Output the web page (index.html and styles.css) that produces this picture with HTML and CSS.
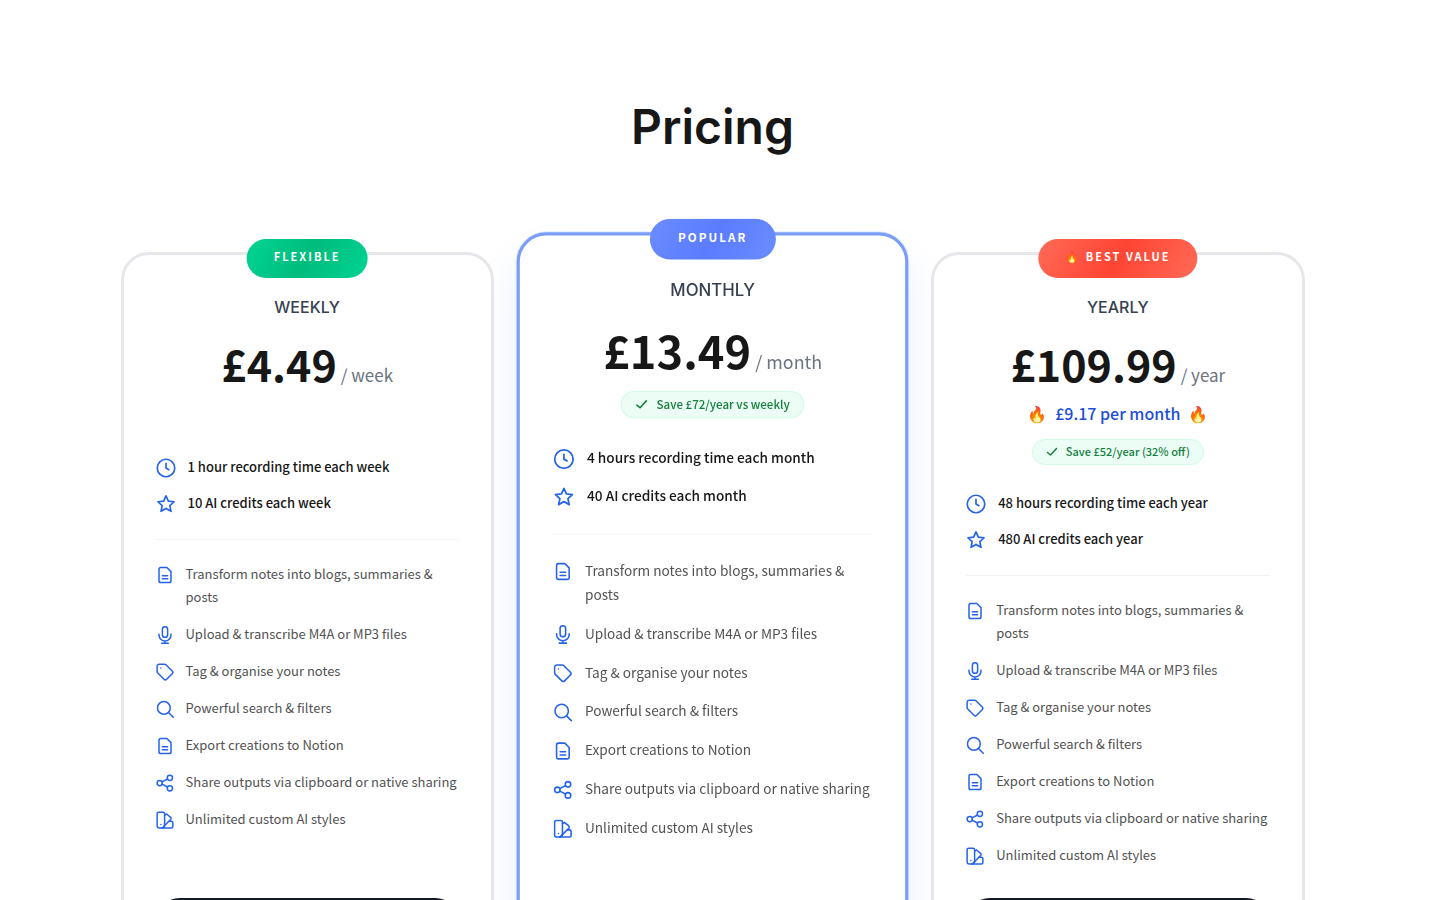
FILE: index.html
```html
<!DOCTYPE html>
<html lang="en">
<head>
<meta charset="utf-8">
<meta name="viewport" content="width=device-width, initial-scale=1">
<title>Pricing</title>
<link rel="stylesheet" href="styles.css">
</head>
<body>
<svg class="sprite" aria-hidden="true">
  <symbol id="clock" viewBox="0 0 24 24"><circle cx="12" cy="12" r="10.500"/><path d="M12 6.500v5.500l3.500 2"/></symbol>
  <symbol id="star" viewBox="0 0 24 24"><path d="M12 2.300l2.800 6.200 6.900.800-5.100 4.600 1.400 6.900-6-3.500-6 3.500 1.400-6.900-5.100-4.600 6.900-.800z"/></symbol>
  <symbol id="file" viewBox="0 0 24 24"><path d="M14.500 2H6.500a2.500 2.500 0 0 0-2.500 2.500v15A2.500 2.500 0 0 0 6.500 22h11a2.500 2.500 0 0 0 2.500-2.500V7.500z"/><path d="M8.500 13h7M8.500 17h7"/></symbol>
  <symbol id="mic" viewBox="0 0 24 24"><rect x="8.500" y="1" width="7" height="14" rx="3.500"/><path d="M4 11v1a8 8 0 0 0 16 0v-1M12 20v3M7.500 23h9"/></symbol>
  <symbol id="tag" viewBox="0 0 24 24"><path d="M1.500 4.500a3 3 0 0 1 3-3h6.700a3 3 0 0 1 2.100.900l8.300 8.300a2.500 2.500 0 0 1 0 3.500l-7.400 7.400a2.500 2.500 0 0 1-3.500 0L2.400 13.300a3 3 0 0 1-.900-2.100z"/><path d="M6.500 6.500h.01"/></symbol>
  <symbol id="search" viewBox="0 0 24 24"><circle cx="10.500" cy="10.500" r="8.500"/><path d="M16.700 16.700 23 23"/></symbol>
  <symbol id="share" viewBox="0 0 24 24"><circle cx="18.500" cy="5" r="3.500"/><circle cx="5" cy="12" r="3.500"/><circle cx="18.500" cy="19" r="3.500"/><path d="M8.200 10.400l7.100-3.700M8.200 13.600l7.100 3.700"/></symbol>
  <symbol id="styles" viewBox="0 0 24 24"><path d="M3.500 1.500h6a2 2 0 0 1 2 2v15a4 4 0 0 1-4 4h-3a3 3 0 0 1-3-3v-16a2 2 0 0 1 2-2z"/><path d="M11.500 5.500l2.500-1.500 5.500 4.500a2 2 0 0 1 .300 2.500L9 22"/><path d="M17.500 13.500h3a2 2 0 0 1 2 2v5a2 2 0 0 1-2 2h-13"/><path d="M6.500 18h.01"/></symbol>
  <symbol id="check" viewBox="0 0 24 24"><path d="M3 13l6 5L21 5"/></symbol>
</svg>

<main class="pricing">
  <h1 class="title">Pricing</h1>
  <div class="plans">

    <section class="plan">
      <span class="badge badge-green">FLEXIBLE</span>
      <h2 class="name">WEEKLY</h2>
      <p class="price"><strong class="amount">£4.49</strong><span class="period">/ week</span></p>
      <div class="details"></div>
      <ul class="limits">
        <li><svg class="icon"><use href="#clock"/></svg>1 hour recording time each week</li>
        <li><svg class="icon"><use href="#star"/></svg>10 AI credits each week</li>
      </ul>
      <ul class="features">
        <li><svg class="icon"><use href="#file"/></svg>Transform notes into blogs, summaries &amp; posts</li>
        <li><svg class="icon"><use href="#mic"/></svg>Upload &amp; transcribe M4A or MP3 files</li>
        <li><svg class="icon"><use href="#tag"/></svg>Tag &amp; organise your notes</li>
        <li><svg class="icon"><use href="#search"/></svg>Powerful search &amp; filters</li>
        <li><svg class="icon"><use href="#file"/></svg>Export creations to Notion</li>
        <li><svg class="icon"><use href="#share"/></svg>Share outputs via clipboard or native sharing</li>
        <li><svg class="icon"><use href="#styles"/></svg>Unlimited custom AI styles</li>
      </ul>
      <button class="choose" type="button">Get started</button>
    </section>

    <section class="plan plan-popular">
      <span class="badge badge-blue">POPULAR</span>
      <h2 class="name">MONTHLY</h2>
      <p class="price"><strong class="amount">£13.49</strong><span class="period">/ month</span></p>
      <div class="details">
        <p class="saving"><svg class="icon"><use href="#check"/></svg>Save £72/year vs weekly</p>
      </div>
      <ul class="limits">
        <li><svg class="icon"><use href="#clock"/></svg>4 hours recording time each month</li>
        <li><svg class="icon"><use href="#star"/></svg>40 AI credits each month</li>
      </ul>
      <ul class="features">
        <li><svg class="icon"><use href="#file"/></svg>Transform notes into blogs, summaries &amp; posts</li>
        <li><svg class="icon"><use href="#mic"/></svg>Upload &amp; transcribe M4A or MP3 files</li>
        <li><svg class="icon"><use href="#tag"/></svg>Tag &amp; organise your notes</li>
        <li><svg class="icon"><use href="#search"/></svg>Powerful search &amp; filters</li>
        <li><svg class="icon"><use href="#file"/></svg>Export creations to Notion</li>
        <li><svg class="icon"><use href="#share"/></svg>Share outputs via clipboard or native sharing</li>
        <li><svg class="icon"><use href="#styles"/></svg>Unlimited custom AI styles</li>
      </ul>
      <button class="choose" type="button">Get started</button>
    </section>

    <section class="plan">
      <span class="badge badge-red"><span class="flame">🔥</span> BEST VALUE</span>
      <h2 class="name">YEARLY</h2>
      <p class="price"><strong class="amount">£109.99</strong><span class="period">/ year</span></p>
      <div class="details">
        <p class="equivalent"><span>🔥</span>£9.17 per month<span>🔥</span></p>
        <p class="saving"><svg class="icon"><use href="#check"/></svg>Save £52/year (32% off)</p>
      </div>
      <ul class="limits">
        <li><svg class="icon"><use href="#clock"/></svg>48 hours recording time each year</li>
        <li><svg class="icon"><use href="#star"/></svg>480 AI credits each year</li>
      </ul>
      <ul class="features">
        <li><svg class="icon"><use href="#file"/></svg>Transform notes into blogs, summaries &amp; posts</li>
        <li><svg class="icon"><use href="#mic"/></svg>Upload &amp; transcribe M4A or MP3 files</li>
        <li><svg class="icon"><use href="#tag"/></svg>Tag &amp; organise your notes</li>
        <li><svg class="icon"><use href="#search"/></svg>Powerful search &amp; filters</li>
        <li><svg class="icon"><use href="#file"/></svg>Export creations to Notion</li>
        <li><svg class="icon"><use href="#share"/></svg>Share outputs via clipboard or native sharing</li>
        <li><svg class="icon"><use href="#styles"/></svg>Unlimited custom AI styles</li>
      </ul>
      <button class="choose" type="button">Get started</button>
    </section>

  </div>
</main>
</body>
</html>
```
FILE: styles.css
```css
* { box-sizing: border-box; }

body {
  margin: 0;
  padding-right: 15px;
  background: #fff;
  color: #171717;
  font-family: "Noto Sans CJK SC", "Noto Sans", sans-serif;
}

h1, h2, p, ul { margin: 0; padding: 0; }
ul { list-style: none; }

.sprite { position: absolute; width: 0; height: 0; }

.icon {
  flex: none;
  fill: none;
  stroke: #2563eb;
  stroke-width: 2;
  stroke-linecap: round;
  stroke-linejoin: round;
  overflow: visible;
}

.pricing {
  max-width: 1280px;
  margin: 0 auto;
  padding: 96px 48px;
}

.title {
  font-family: Inter, sans-serif;
  font-size: 48px;
  font-weight: 600;
  line-height: 62px;
  text-align: center;
}

.plans {
  display: grid;
  grid-template-columns: repeat(3, 1fr);
  gap: 32px;
  margin-top: 94px;
}

.plan {
  position: relative;
  z-index: 1;
  display: flex;
  flex-direction: column;
  padding: 40px 32px 82px;
  border: 3px solid #e5e7eb;
  border-radius: 28px;
  background: #fff;
}

.plan-popular {
  z-index: 0;
  border-color: #7c9df5;
  box-shadow: 0 0 0 1px #e0edff, 0 24px 40px -4px rgba(59, 120, 246, 0.15);
  transform: scale(1.05);
}

.badge {
  position: absolute;
  top: -16px;
  left: 50%;
  transform: translateX(-50%);
  padding: 7px 27px 12px;
  border-radius: 20px;
  color: #fff;
  font-size: 11px;
  font-weight: 700;
  line-height: 20px;
  letter-spacing: 2px;
  white-space: nowrap;
}

.badge-green { background: linear-gradient(120deg, #00d492, #00bc7d, #00d492); }
.badge-blue { background: linear-gradient(120deg, #6b8cff, #5b7cff, #6b8cff); }
.badge-red { background: linear-gradient(120deg, #ff6b57, #ff4433, #ff6b57); }

.name {
  color: #374151;
  font-family: Inter, sans-serif;
  font-size: 16px;
  font-weight: 500;
  line-height: 24px;
  text-align: center;
}

.price {
  display: flex;
  justify-content: center;
  align-items: baseline;
  gap: 4px;
  margin-top: 16px;
}

.amount { font-size: 43px; font-weight: 700; line-height: 56px; }
.period { color: #6b7280; font-size: 17px; line-height: 24px; }

.details {
  display: flex;
  flex-direction: column;
  align-items: center;
  gap: 16px;
  min-height: 26px;
  margin-top: 12px;
}

.equivalent {
  display: flex;
  gap: 8px;
  color: #1d4ed8;
  font-size: 16px;
  font-weight: 500;
  line-height: 20px;
}

.saving {
  display: flex;
  align-items: center;
  gap: 8px;
  padding: 0 13px 2px;
  border: 1px solid #d1fae5;
  border-radius: 13px;
  background: #ecfdf5;
  color: #15803d;
  font-size: 11px;
  font-weight: 500;
  line-height: 22px;
}

.saving .icon {
  width: 12px;
  height: 12px;
  margin-top: 2px;
  stroke: #15803d;
  stroke-width: 3;
}

.limits {
  display: grid;
  gap: 12px;
  margin-top: 26px;
  padding-bottom: 24px;
  border-bottom: 1px solid #f3f4f6;
  font-size: 13px;
  font-weight: 500;
  line-height: 24px;
}

.limits li { display: flex; gap: 12px; }
.limits .icon { width: 20px; height: 20px; margin-top: 3px; }

.features {
  display: grid;
  gap: 14px;
  margin: 22px 0 32px;
  color: #525252;
  font-size: 13px;
  line-height: 23px;
}

.features li { display: flex; gap: 12px; }
.features .icon { width: 18px; height: 18px; margin-top: 4px; }

.choose {
  margin-top: auto;
  height: 56px;
  border: 0;
  border-radius: 24px;
  background: #111827;
  color: #fff;
  font: inherit;
  font-weight: 700;
}
```
